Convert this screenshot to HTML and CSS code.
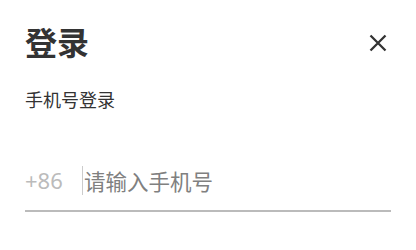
FILE: index.html
```html
<!DOCTYPE html>
<html lang="zh">
<head>
<meta charset="utf-8">
<link rel="stylesheet" href="styles.css">
</head>
<body>
<div class="panel">
  <div class="header">
    <h1 class="title">登录</h1>
    <button class="close" aria-label="关闭">
      <svg width="20" height="20" viewBox="0 0 20 20"><path d="M2.5 2.5 L17.5 17.5 M17.5 2.5 L2.5 17.5" stroke="#333" stroke-width="2.3" fill="none"/></svg>
    </button>
  </div>
  <div class="subtitle">手机号登录</div>
  <div class="field">
    <span class="prefix">+86</span>
    <span class="sep"></span>
    <span class="placeholder">请输入手机号</span>
  </div>
</div>
</body>
</html>
```

FILE: styles.css
```css
html, body {
  margin: 0;
  padding: 0;
  background: #fff;
}
body {
  font-family: "Noto Sans", "Noto Sans CJK SC", sans-serif;
  color: #333;
}
.panel {
  padding: 20px 25px 0 25px;
}
.header {
  display: flex;
  align-items: center;
  justify-content: space-between;
  height: 46px;
}
.title {
  margin: 0;
  font-size: 32px;
  font-weight: 700;
  line-height: 46px;
  color: #333;
}
.close {
  border: 0;
  background: none;
  padding: 0;
  margin-right: 3px;
  width: 20px;
  height: 20px;
  display: flex;
}
.subtitle {
  margin-top: 22px;
  font-size: 18px;
  line-height: 24px;
  color: #333;
}
.field {
  margin-top: 48px;
  display: flex;
  align-items: center;
  height: 40px;
  border-bottom: 2px solid #bbb;
  width: 366px;
  padding-bottom: 10px;
}
.prefix {
  font-size: 22px;
  color: #bbb;
  width: 57px;
}
.sep {
  width: 1px;
  height: 29px;
  background: #ccc;
  margin-right: 1px;
}
.placeholder {
  font-size: 21.5px;
  color: #808080;
}
```
